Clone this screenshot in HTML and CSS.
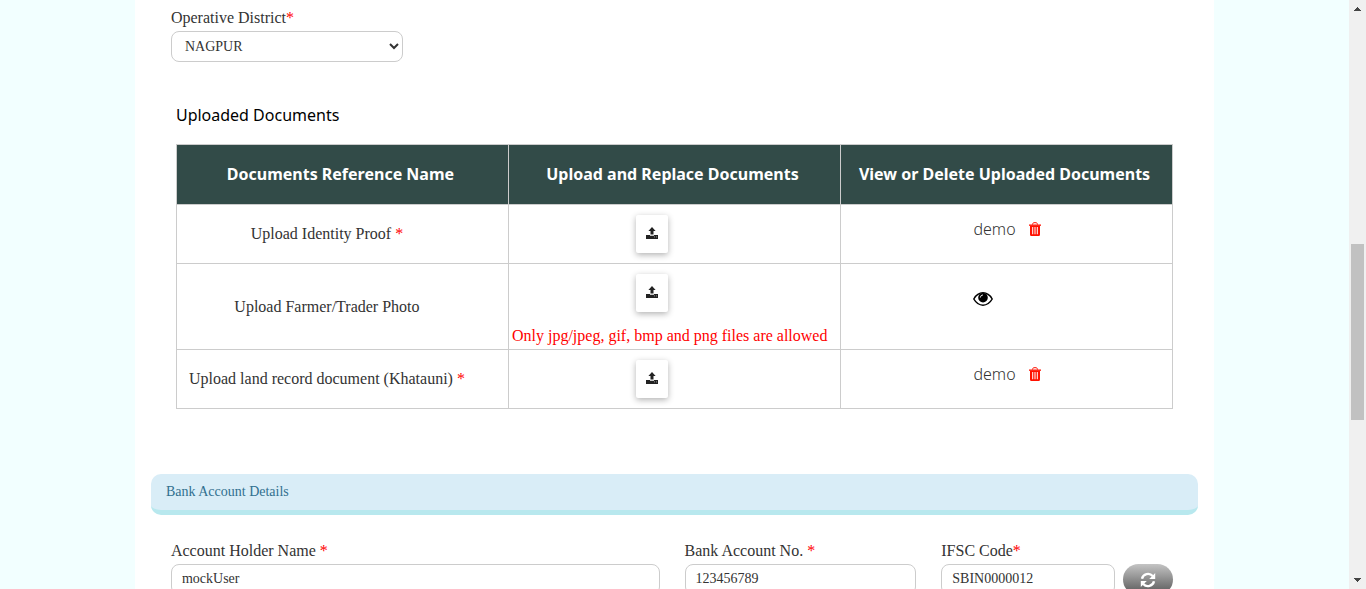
FILE: index.html
```html
<!DOCTYPE html>
<html lang="en">
<head>
<meta charset="utf-8">
<title>Registration</title>
<link rel="stylesheet" href="styles.css">
</head>
<body>
<svg class="defs" aria-hidden="true">
  <symbol id="upload" viewBox="0 0 12 12"><path d="M6 0L9.600 4H7.500V7.500H4.500V4H2.400Z"/><path d="M0 8h4v.8h4V8H12v4H0z"/><path d="M8 9.900h1M10 9.900h1" stroke="#fff" stroke-width=".5"/></symbol>
  <symbol id="trash" viewBox="0 0 12 14"><path d="M3.5 2.6L4 1.2Q4.200 .7 4.800 .7H7.200Q7.800 .7 8 1.200L8.500 2.600" fill="none" stroke="currentColor"/><path d="M0 2.500h12v1.300H0z"/><path fill-rule="evenodd" d="M1 3.500h10v9q0 1.500-1.300 1.500H2.300Q1 14 1 12.500zM3.200 5v7.200h1V5zM5.500 5v7.200h1V5zM7.800 5v7.200h1V5z"/></symbol>
  <symbol id="eye" viewBox="0 0 20 14"><path d="M.8 7C5.500-1.200 14.500-1.200 19.200 7C14.500 15.200 5.500 15.200 .8 7Z" fill="#fff" stroke="currentColor" stroke-width="1.500"/><circle cx="10" cy="5.700" r="4.800"/><path d="M7.300 5.600Q7.400 3 10 2.900" fill="none" stroke="#fff" stroke-width=".9"/></symbol>
  <symbol id="refresh" viewBox="0 0 16 16"><path d="M2 6.800A6.200 6.200 0 0 1 12.700 4M14 9.200A6.200 6.200 0 0 1 3.300 12" fill="none" stroke="currentColor" stroke-width="2.400"/><path d="M15.200 1v6h-6zM.8 15V9h6z"/></symbol>
</svg>
<div class="window">
  <main class="page">
    <section class="fields">
      <div class="field">
        <label for="district">Operative District<span class="req">*</span></label>
        <select id="district" class="control select"><option>NAGPUR</option></select>
      </div>
    </section>

    <section class="documents">
      <h2 class="documents-title">Uploaded Documents</h2>
      <table class="doc-table">
        <thead>
          <tr><th>Documents Reference Name</th><th>Upload and Replace Documents</th><th>View or Delete Uploaded Documents</th></tr>
        </thead>
        <tbody>
          <tr>
            <td class="name">Upload Identity Proof <span class="req">*</span></td>
            <td class="upload"><button class="upload-btn" aria-label="Upload identity proof"><svg class="icon-upload"><use href="#upload"/></svg></button></td>
            <td class="view"><div class="file"><a class="file-link" href="#">demo</a><button class="icon-btn" aria-label="Delete"><svg class="icon-trash"><use href="#trash"/></svg></button></div></td>
          </tr>
          <tr>
            <td class="name">Upload Farmer/Trader Photo</td>
            <td class="upload"><button class="upload-btn" aria-label="Upload photo"><svg class="icon-upload"><use href="#upload"/></svg></button><p class="hint">Only jpg/jpeg, gif, bmp and png files are allowed</p></td>
            <td class="view view-photo"><div class="file"><button class="icon-btn eye-btn" aria-label="View photo"><svg class="icon-eye"><use href="#eye"/></svg></button></div></td>
          </tr>
          <tr>
            <td class="name">Upload land record document (Khatauni) <span class="req">*</span></td>
            <td class="upload"><button class="upload-btn" aria-label="Upload land record"><svg class="icon-upload"><use href="#upload"/></svg></button></td>
            <td class="view"><div class="file"><a class="file-link" href="#">demo</a><button class="icon-btn" aria-label="Delete"><svg class="icon-trash"><use href="#trash"/></svg></button></div></td>
          </tr>
        </tbody>
      </table>
    </section>

    <h2 class="section-bar">Bank Account Details</h2>
    <section class="fields">
      <div class="field wide">
        <label for="holder">Account Holder Name <span class="req">*</span></label>
        <input id="holder" class="control" type="text" value="mockUser">
      </div>
      <div class="field">
        <label for="account">Bank Account No. <span class="req">*</span></label>
        <input id="account" class="control" type="text" value="123456789">
      </div>
      <div class="field">
        <label for="ifsc">IFSC Code<span class="req">*</span></label>
        <div class="with-button">
          <input id="ifsc" class="control" type="text" value="SBIN0000012">
          <button class="refresh-btn" aria-label="Refresh"><svg class="icon-refresh"><use href="#refresh"/></svg></button>
        </div>
      </div>
    </section>
  </main>
  <div class="scrollbar" aria-hidden="true">
    <svg class="arrow" viewBox="0 0 7 4"><path d="M3 0h1v1h1v1h1v1h1v1H0V3h1V2h1V1h1z"/></svg>
    <div class="track"><div class="thumb"></div></div>
    <svg class="arrow" viewBox="0 0 7 4"><path d="M0 0h7v1H6v1H5v1H4v1H3V3H2V2H1V1H0z"/></svg>
  </div>
</div>
</body>
</html>
```
FILE: styles.css
```css
* { box-sizing: border-box; }
body {
  margin: 0;
  background: #f2ffff;
  color: #333;
  font-family: "Liberation Serif", "Times New Roman", serif;
  font-size: 16px;
}
button { border: 0; padding: 0; background: none; cursor: pointer; }
svg { display: block; fill: currentColor; }
.defs { display: none; }
.window { display: flex; justify-content: space-between; height: 100vh; overflow: hidden; }
.page { width: 79%; margin: 0 auto; padding: 5px 16px 0; background: #fff; }
.req { color: #f00; }

.fields { display: grid; grid-template-columns: repeat(4, 1fr); column-gap: 25px; padding: 0 25px 0 20px; }
.field { display: flex; flex-direction: column; min-width: 0; }
.wide { grid-column: span 2; }
.field label { line-height: 26px; white-space: nowrap; }
.control {
  width: 100%;
  min-width: 0;
  height: 31px;
  padding: 0 10px 2px;
  border: 1px solid #ccc;
  border-radius: 8px;
  background: #fff;
  color: #333;
  font: 14px "Liberation Serif", "Times New Roman", serif;
}
.select { padding: 0 9px; }
.with-button { display: flex; gap: 8px; }
.with-button .control { flex: 1; }

.documents { padding: 41px 25px 65px; }
.documents-title { margin: 0 0 17px; color: #000; font: 16px/24px "Noto Sans", sans-serif; }
.doc-table { width: 100%; table-layout: fixed; border-collapse: collapse; }
.doc-table th {
  height: 60px;
  padding: 0 4px 2px 0;
  border: 1px solid #ccc;
  background: #324b48;
  color: #fff;
  font: bold 16px "Noto Sans", sans-serif;
}
.doc-table td { height: 59px; padding: 0; border: 1px solid #ccc; }
.doc-table .name { padding-right: 31px; text-align: center; }
.doc-table .upload { padding: 10px 3px; vertical-align: top; }
.upload-btn {
  display: flex;
  align-items: center;
  justify-content: center;
  width: 32px;
  height: 38px;
  margin-left: 124px;
  padding-bottom: 2px;
  border-radius: 2px;
  background: #fff;
  color: #222;
  box-shadow: 0 2px 6px rgba(0, 0, 0, .3);
}
.icon-upload { width: 12px; height: 12px; }
.hint { margin: 14px 0 -7px; color: #f00; line-height: 20px; white-space: nowrap; }
.doc-table .view { padding-top: 12px; vertical-align: top; }
.doc-table .view-photo { padding-top: 28px; }
.file { display: flex; align-items: center; gap: 13px; margin-left: 40%; }
.file-link { color: #333; text-decoration: none; font: 300 16px/24px "Noto Sans", sans-serif; }
.icon-btn { color: #f10; }
.eye-btn { color: #000; }
.icon-trash { width: 12px; height: 14px; }
.icon-eye { width: 20px; height: 14px; }

.section-bar {
  margin: 0 0 23px;
  padding: 8px 15px;
  border-bottom: 5px solid #b8e8ee;
  border-radius: 10px;
  background: #d9edf7;
  color: #31708f;
  font-size: 14px;
  font-weight: normal;
  line-height: 20px;
}
.refresh-btn {
  display: flex;
  align-items: center;
  justify-content: center;
  width: 50px;
  height: 31px;
  border-radius: 16px;
  background: linear-gradient(#c4c4c4, #555);
  color: #fff;
}
.icon-refresh { width: 16px; height: 16px; }

.scrollbar { display: flex; flex-direction: column; align-items: center; width: 17px; padding: 7px 0; background: #f0f0f0; }
.arrow { width: 7px; height: 4px; color: #444; }
.track { flex: 1; width: 13px; padding-top: 233px; }
.thumb { height: 176px; background: #c1c1c1; }
```
